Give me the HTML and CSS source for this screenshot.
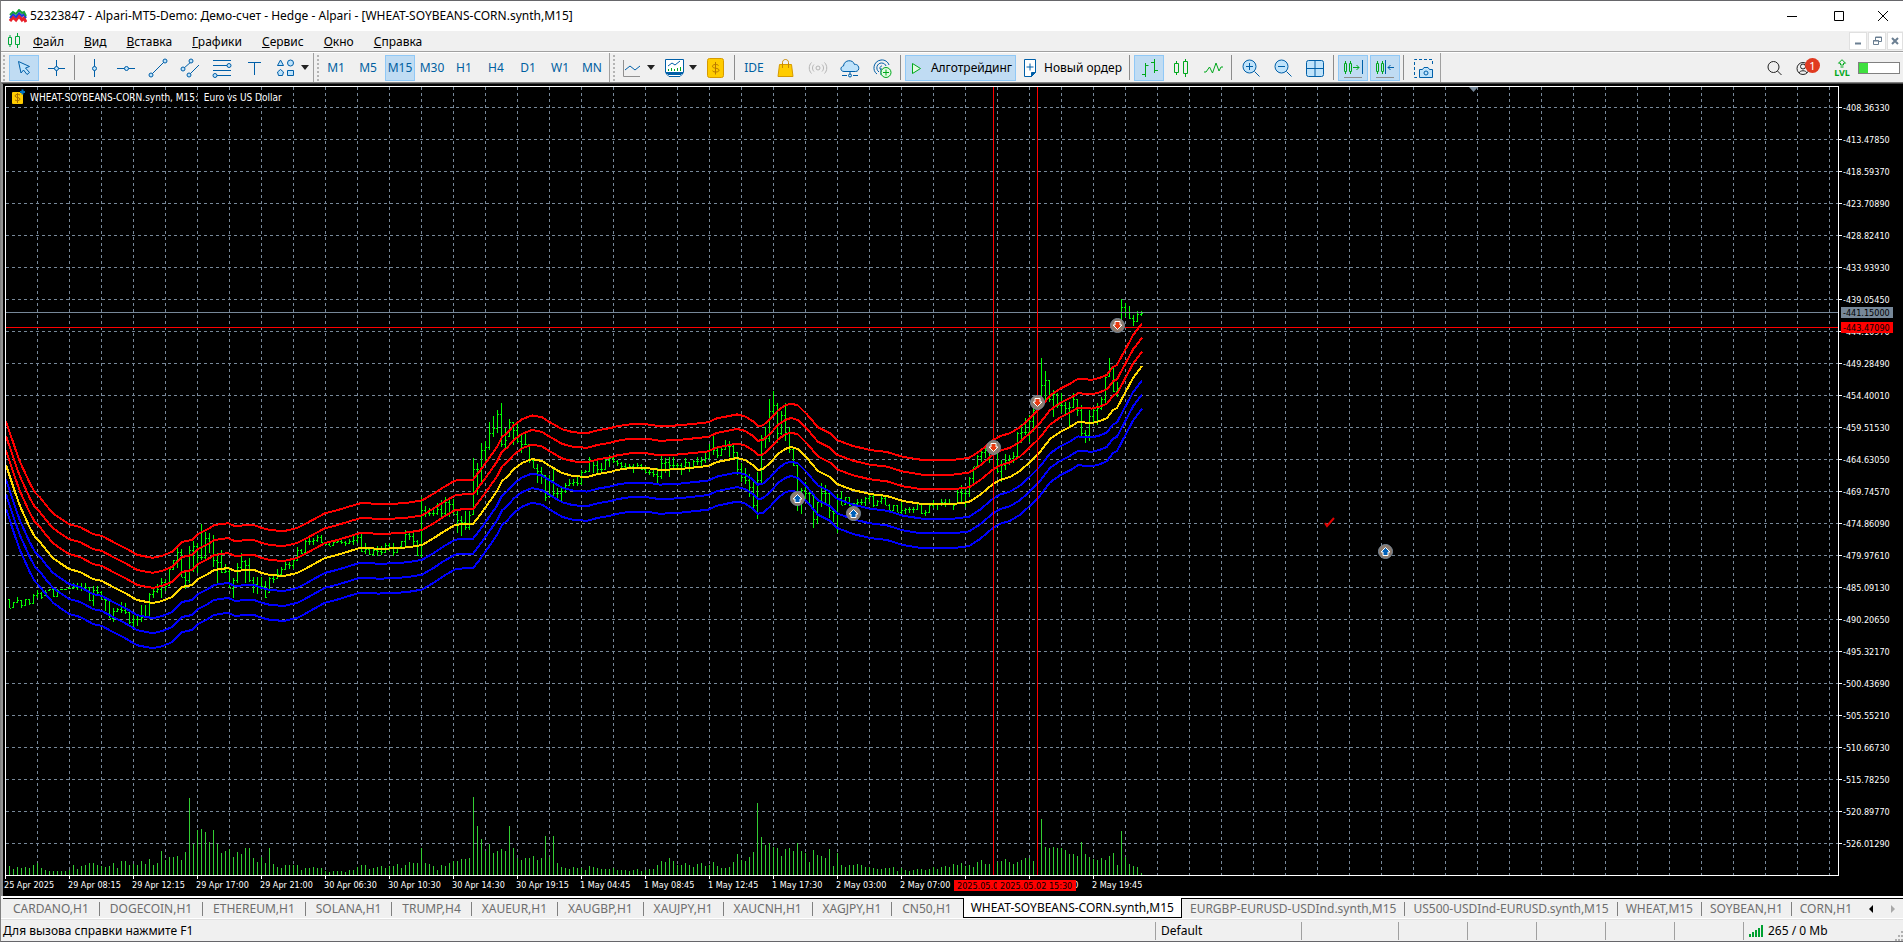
FILE: index.html
```
<!DOCTYPE html>
<html lang="ru">
<head>
    <meta charset="UTF-8">
    <meta name="viewport" content="width=device-width, initial-scale=1.0">
    <title>52323847 - Alpari-MT5-Demo</title>
    <link rel="stylesheet" href="styles.css">
</head>
<body>
    <header class="titlebar">
        <svg class="app-icon" width="18" height="14" viewBox="0 0 18 14" fill="none" stroke-width="2">
            <path d="M1 12l3-4 3 3 3-4 3 4 2-2 2 4" stroke="#e8202a" stroke-width="3"/>
            <path d="M1 9l3-4 3 3 3-4 3 3 2-2 2 4" stroke="#2038d8"/>
            <path d="M1 6l3-3 3 2 3-4 3 3 2-1 2 4" stroke="#18a038"/>
        </svg>
        <span class="title">52323847 - Alpari-MT5-Demo: Демо-счет - Hedge - Alpari - [WHEAT-SOYBEANS-CORN.synth,M15]</span>
        <div class="window-buttons">
            <button aria-label="Свернуть"><svg width="12" height="12" viewBox="0 0 12 12"><path d="M1 6.500h10" stroke="#000"/></svg></button>
            <button aria-label="Развернуть"><svg width="12" height="12" viewBox="0 0 12 12"><path d="M1.500 1.500h9v9h-9z" stroke="#000" fill="none"/></svg></button>
            <button aria-label="Закрыть"><svg width="12" height="12" viewBox="0 0 12 12"><path d="M1 1l10 10M11 1L1 11" stroke="#000"/></svg></button>
        </div>
    </header>

    <nav class="menubar">
        <svg class="menu-icon" width="14" height="16" viewBox="0 0 14 16" fill="none" stroke="#00a83a">
            <path d="M1.500 4.500h3v7h-3zM3 2v2.500M3 11.500V14M8.500 3.500h4v8h-4zM10.500 0v3.500M10.500 11.500V15"/>
        </svg>
        <a href="#"><u>Ф</u>айл</a>
        <a href="#"><u>В</u>ид</a>
        <a href="#"><u>В</u>ставка</a>
        <a href="#"><u>Г</u>рафики</a>
        <a href="#"><u>С</u>ервис</a>
        <a href="#"><u>О</u>кно</a>
        <a href="#"><u>С</u>правка</a>
        <div class="child-buttons">
            <button aria-label="Свернуть график"><svg width="10" height="10" viewBox="0 0 10 10"><path d="M2 7.500h6" stroke="#6b7f92" stroke-width="2"/></svg></button>
            <button aria-label="Восстановить график"><svg width="10" height="10" viewBox="0 0 10 10" fill="none" stroke="#6b7f92"><path d="M3.500 4V1h6v4.500H7M3 1.500h7M1.500 4.500h5v4h-5zM1 5h6"/></svg></button>
            <button aria-label="Закрыть график"><svg width="10" height="10" viewBox="0 0 10 10"><path d="M2 2l6 6M8 2L2 8" stroke="#6b7f92" stroke-width="2"/></svg></button>
        </div>
    </nav>

    <div class="toolbar">
        <span class="grip"></span>
        <button class="tool active" aria-label="Курсор"><svg width="24" height="24" viewBox="0 0 24 24" class="line"><path class="pale" d="M6.500 5.500l11 5-4 1.500 4 4.500-2.500 2-3.500-4.500-2.500 3z"/></svg></button>
        <button class="tool" aria-label="Перекрестие"><svg width="24" height="24" viewBox="0 0 24 24" class="line"><path d="M12.500 4v16M4 12.500h17"/><circle class="pale" cx="12.500" cy="12.500" r="2"/></svg></button>
        <span class="sep"></span>
        <button class="tool" aria-label="Вертикальная линия"><svg width="24" height="24" viewBox="0 0 24 24" class="line"><path d="M12.500 3v18"/><circle class="pale" cx="12.500" cy="12.500" r="2"/></svg></button>
        <button class="tool" aria-label="Горизонтальная линия"><svg width="24" height="24" viewBox="0 0 24 24" class="line"><path d="M3 12.500h18"/><circle class="pale" cx="12.500" cy="12.500" r="2"/></svg></button>
        <button class="tool" aria-label="Трендовая линия"><svg width="24" height="24" viewBox="0 0 24 24" class="line"><path d="M5 19L19 5"/><circle class="pale" cx="5" cy="19" r="2"/><circle class="pale" cx="19" cy="5" r="2"/></svg></button>
        <button class="tool" aria-label="Канал"><svg width="24" height="24" viewBox="0 0 24 24" class="line"><path d="M5 13l9-8M11 19L21 9"/><circle class="pale" cx="5" cy="13" r="2"/><circle class="pale" cx="13" cy="5" r="2"/><circle class="pale" cx="11" cy="19" r="2"/></svg></button>
        <button class="tool" aria-label="Уровни Фибоначчи"><svg width="24" height="24" viewBox="0 0 24 24" class="line"><path d="M3 4.500h18M3 9.500h18M3 14.500h18M3 19.500h18"/><circle class="pale" cx="19" cy="9.500" r="2"/><circle class="pale" cx="5" cy="19.500" r="2"/></svg></button>
        <button class="tool" aria-label="Текст"><svg width="24" height="24" viewBox="0 0 24 24" class="line"><path d="M6 6.500h13M12.500 6v13"/></svg></button>
        <button class="tool wide" aria-label="Фигуры"><svg width="24" height="24" viewBox="0 0 24 24" class="line"><path class="pale" d="M3.500 9.500l3-5.500 3 5.500zM6.500 13.500l3 2.500-1 3.500h-4l-1-3.500z"/><circle class="pale" cx="16.500" cy="7" r="3"/><path class="pale" d="M13.500 14.500h6v5h-6z"/></svg><i class="caret"></i></button>
        <span class="divider"></span>
        <span class="grip"></span>
        <button class="tool">M1</button>
        <button class="tool">M5</button>
        <button class="tool active">M15</button>
        <button class="tool">M30</button>
        <button class="tool">H1</button>
        <button class="tool">H4</button>
        <button class="tool">D1</button>
        <button class="tool">W1</button>
        <button class="tool">MN</button>
        <span class="divider"></span>
        <span class="grip"></span>
        <button class="tool wide" aria-label="Тип графика"><svg width="24" height="24" viewBox="0 0 24 24" class="line"><path stroke="#909090" d="M3.500 4v16.500H20"/><path d="M5 14l5-4 5 4 5-4"/></svg><i class="caret"></i></button>
        <button class="tool wide" aria-label="Индикаторы"><svg width="24" height="24" viewBox="0 0 24 24" class="line"><path d="M3.500 3.500h18v13h-18zM4 17.500l3 3h11l3-3z" fill="#fff"/><path d="M6 10l4-3 3 2 5-4"/><path stroke="#00a81c" d="M6.500 15v-2M9.500 15v-3M12.500 15v-2M15.500 15v-3M18.500 15v-4"/><path d="M6 18.500h13"/></svg><i class="caret"></i></button>
        <button class="tool" aria-label="Котировки"><svg width="24" height="24" viewBox="0 0 24 24"><rect x="3.500" y="2.500" width="16" height="19" rx="2" fill="#fc0" stroke="#d69a00"/><path d="M14.500 9.500c-1-1.500-6-1.500-6 .8 0 2.700 6.500 1.200 6.500 4 0 2.200-5.500 2.200-6.500.5M11.500 6v12.500" fill="none" stroke="#b87800"/></svg></button>
        <span class="sep"></span>
        <button class="tool">IDE</button>
        <button class="tool" aria-label="Маркет"><svg width="24" height="24" viewBox="0 0 24 24"><path d="M5.500 8.500h12l1.500 12H4z" fill="#fc0" stroke="#d69a00"/><path d="M8.500 12V6.500c0-4 6-4 6 0V12" fill="none" stroke="#c88a00"/></svg></button>
        <button class="tool" aria-label="Сигналы"><svg width="24" height="24" viewBox="0 0 24 24" fill="none" stroke="#b4b4b4"><circle cx="12" cy="12" r="2"/><path d="M8 8.500c-2 2-2 5 0 7M16 8.500c2 2 2 5 0 7M5.500 6.500c-3 3-3 8 0 11M18.500 6.500c3 3 3 8 0 11"/></svg></button>
        <button class="tool" aria-label="Облако"><svg width="24" height="24" viewBox="0 0 24 24" class="line"><path class="pale" d="M6 15.500c-4 0-4-5-.5-5.500C6 3.500 15 3 16.500 8.500c5-1 6 7 1 7z"/><path d="M12 15.500v4M4 19.500h5M15 19.500h5"/><circle class="pale" cx="12" cy="19.500" r="1.500"/></svg></button>
        <button class="tool" aria-label="VPS"><svg width="24" height="24" viewBox="0 0 24 24" class="line"><path d="M7 18c-5-3-4-13 4-14 4-.5 7 2 8 5M9 16c-4-3-2-9 2.500-9 2.500 0 4 1.500 4.500 3M11 14c-2-1.500-1-4 1-4M11 12v7"/><circle cx="16" cy="16.500" r="5" fill="#e2fbe2" stroke="#00a81c"/><path d="M16 13.500v6M13 16.500h6" stroke="#00a81c"/></svg></button>
        <span class="sep"></span>
        <button class="tool labelled algo active"><svg width="16" height="20" viewBox="0 0 16 20"><path d="M3.500 5.500l8 5-8 5z" fill="#e2fbe2" stroke="#00a81c"/></svg>Алготрейдинг</button>
        <button class="tool labelled order"><svg width="16" height="20" viewBox="0 0 16 20" class="line"><path fill="#fff" d="M2.500 1.500h11v13l-4 4h-7z"/><path d="M8 5.500v7M4.500 9h7"/><path fill="#005fa8" d="M13.500 14.500h-4v4z"/></svg>Новый ордер</button>
        <span class="sep"></span>
        <button class="tool active" aria-label="Бары"><svg width="24" height="24" viewBox="0 0 24 24" class="green"><path d="M8.500 7v14M5 18.500h3.500M8.500 9.500h3M17.500 3v14M14 6.500h3.500M17.500 14.500H21"/></svg></button>
        <button class="tool" aria-label="Свечи"><svg width="24" height="24" viewBox="0 0 24 24" class="green"><path d="M5.500 7.500h4v9h-4zM7.500 5v2.500M7.500 16.500V19M14.500 5.500h4v12h-4zM16.500 3v2.500M16.500 17.500V21"/></svg></button>
        <button class="tool" aria-label="Линия"><svg width="24" height="24" viewBox="0 0 24 24" class="green"><path d="M3 16h2l3.500-5 3 6 3.500-10 3 8 2-4h2"/></svg></button>
        <span class="sep"></span>
        <button class="tool" aria-label="Увеличить"><svg width="24" height="24" viewBox="0 0 24 24" class="line"><circle class="pale" cx="10.500" cy="10.500" r="6.500"/><path d="M15.500 15.500l5 5M7 10.500h7M10.500 7v7"/></svg></button>
        <button class="tool" aria-label="Уменьшить"><svg width="24" height="24" viewBox="0 0 24 24" class="line"><circle class="pale" cx="10.500" cy="10.500" r="6.500"/><path d="M15.500 15.500l5 5M7 10.500h7"/></svg></button>
        <button class="tool" aria-label="Окна мозаикой"><svg width="24" height="24" viewBox="0 0 24 24" class="line"><rect class="pale" x="3.500" y="4.500" width="17" height="16" rx="2"/><path d="M12 4.500v16M3.500 12.500h17"/></svg></button>
        <span class="sep"></span>
        <button class="tool active" aria-label="Автопрокрутка"><svg width="24" height="24" viewBox="0 0 24 24" class="green"><path d="M3.500 7.500h2v8h-2zM4.500 5v2.500M4.500 15.500V18M8.500 7.500h2v8h-2zM9.500 5v2.500M9.500 15.500V18M12 11.500h6M15.500 9l2.500 2.500-2.500 2.500"/><path stroke="#005fa8" d="M21.500 4v14"/><path stroke="#909090" d="M3 21.500h18"/></svg></button>
        <button class="tool active" aria-label="Сдвиг графика"><svg width="24" height="24" viewBox="0 0 24 24" class="green"><path d="M3.500 7.500h2v8h-2zM4.500 5v2.500M4.500 15.500V18M8.500 7.500h2v8h-2zM9.500 5v2.500M9.500 15.500V18"/><path stroke="#005fa8" d="M12.500 4v14M15 11.500h6M17.500 9L15 11.500l2.500 2.500"/><path stroke="#909090" d="M3 21.500h18"/></svg></button>
        <span class="sep"></span>
        <button class="tool" aria-label="Снимок"><svg width="24" height="24" viewBox="0 0 24 24" class="line"><path stroke-dasharray="3 2" d="M6 21.500H3.500v-18h18V10"/><path class="pale" d="M8.500 13.500h3l1.500-2h4l1.500 2h3v8h-13z"/><circle class="pale" cx="15" cy="17" r="2"/></svg></button>
        <span class="divider"></span>

        <div class="toolbar-right">
            <button class="tool" aria-label="Поиск"><svg width="24" height="24" viewBox="0 0 24 24" fill="none" stroke="#222"><circle cx="11.500" cy="11" r="5.500"/><path d="M15.500 15l4 4"/></svg></button>
            <button class="tool account" aria-label="Уведомления"><svg width="24" height="24" viewBox="0 0 24 24" fill="none" stroke="#222"><circle cx="11" cy="12.500" r="6"/><circle cx="11" cy="10.500" r="2.500"/><path d="M7 17c1-3 7-3 8 0"/></svg><span class="badge">1</span></button>
            <button class="tool level" aria-label="Уровень"><svg width="12" height="9" viewBox="0 0 12 9" class="green"><path d="M6 .7l3.500 3.500h-2V6h-3V4.200h-2zM4.500 8h3"/></svg><span>LVL</span></button>
            <div class="meter"><div class="meter-fill"></div></div>
        </div>
    </div>

    <main class="chart">
        <svg id="chart" role="img" aria-label="WHEAT-SOYBEANS-CORN.synth, M15"></svg>
    </main>

    <nav class="tabs">
        <a href="#">CARDANO,H1</a>
        <a href="#">DOGECOIN,H1</a>
        <a href="#">ETHEREUM,H1</a>
        <a href="#">SOLANA,H1</a>
        <a href="#">TRUMP,H4</a>
        <a href="#">XAUEUR,H1</a>
        <a href="#">XAUGBP,H1</a>
        <a href="#">XAUJPY,H1</a>
        <a href="#">XAUCNH,H1</a>
        <a href="#">XAGJPY,H1</a>
        <a href="#" class="before">CN50,H1</a>
        <a href="#" class="current">WHEAT-SOYBEANS-CORN.synth,M15</a>
        <a href="#">EURGBP-EURUSD-USDInd.synth,M15</a>
        <a href="#">US500-USDInd-EURUSD.synth,M15</a>
        <a href="#">WHEAT,M15</a>
        <a href="#">SOYBEAN,H1</a>
        <a href="#" class="before">CORN,H1</a>
        <button class="scroll" aria-label="Назад"><svg width="5" height="8" viewBox="0 0 5 8"><path d="M4 0v8L0 4z" fill="#000"/></svg></button>
        <button class="scroll" aria-label="Вперёд"><svg width="5" height="8" viewBox="0 0 5 8"><path d="M1 0v8l4-4z" fill="#a8a8a8"/></svg></button>
    </nav>

    <footer class="statusbar">
        <span class="help">Для вызова справки нажмите F1</span>
        <span class="cell profile">Default</span>
        <span class="cell date"></span>
        <span class="cell"></span>
        <span class="cell"></span>
        <span class="cell"></span>
        <span class="cell"></span>
        <span class="cell"></span>
        <span class="cell traffic">
            <svg width="14" height="12" viewBox="0 0 14 12" stroke="#00a030" stroke-width="2"><path d="M1 12V9M4 12V7M7 12V5M10 12V3M13 12V0"/></svg>
            265 / 0 Mb
        </span>
        <svg class="sizer" width="8" height="10" viewBox="0 0 8 10" fill="#b0b0b0"><path d="M6 0h2v2H6zM6 4h2v2H6zM3 4h2v2H3zM6 8h2v2H6zM3 8h2v2H3zM0 8h2v2H0z"/></svg>
    </footer>

    <script src="chart.js"></script>
</body>
</html>
```
FILE: styles.css
```
* {
    box-sizing: border-box;
}
body {
    margin: 0;
    height: 100vh;
    display: flex;
    flex-direction: column;
    font-family: "Noto Sans", "Open Sans", sans-serif;
    font-size: 12px;
    color: #000;
    background-color: #f0f0f0;
    border-top: 1px solid #66666a;
    border-bottom: 1px solid #66666a;
    border-left: 1px solid #808080;
    overflow: hidden;
}
a {
    color: inherit;
    text-decoration: none;
}
button {
    font: inherit;
    padding: 0;
    border: none;
    background: none;
    display: flex;
    align-items: center;
    justify-content: center;
}
.titlebar {
    height: 30px;
    flex: none;
    display: flex;
    align-items: center;
    padding-left: 8px;
    background-color: #fff;
}
.title {
    margin-left: 3px;
    padding-bottom: 1px;
}
.window-buttons {
    margin-left: auto;
    display: flex;
    gap: 2px;
}
.window-buttons button {
    width: 45px;
    height: 29px;
}
.window-buttons button:last-child {
    width: 40px;
}
.menubar {
    height: 21px;
    flex: none;
    display: flex;
    align-items: center;
    padding-left: 6px;
    border-bottom: 1px solid #a0a0a0;
}
.menu-icon {
    margin-right: 2px;
}
.menubar a {
    padding: 0 10px;
}
.child-buttons {
    margin-left: auto;
    display: flex;
    gap: 1px;
}
.child-buttons button {
    width: 18px;
    height: 18px;
    background-color: #fff;
    border: 1px solid #e0e0e0;
}
.child-buttons button:last-child {
    width: 16px;
}

/* Toolbar */
.toolbar {
    height: 31px;
    flex: none;
    display: flex;
    align-items: center;
    gap: 2px;
    padding-left: 1px;
    border-top: 1px solid #fff;
    border-bottom: 1px solid #808080;
}
.grip {
    width: 2px;
    height: 26px;
    margin: 0 0 0 1px;
    background: repeating-linear-gradient(#b4b4b4 0 2px, transparent 2px 4px);
}
.toolbar > .grip:first-child {
    margin-right: 2px;
}
.sep {
    width: 1px;
    height: 25px;
    margin: 0 2px 0 1px;
    background-color: #8c8c8c;
}
.divider {
    width: 1px;
    height: 29px;
    background-color: #a0a0a0;
}
.tool {
    width: 30px;
    height: 26px;
    flex: none;
    color: #005fa0;
    border: 1px solid transparent;
}
.tool.active {
    background-color: #c0dcf3;
    border-color: #90c8f6;
}
.tool.wide {
    width: 40px;
    justify-content: flex-start;
    padding-left: 2px;
}
.caret {
    margin-left: 3px;
    border: 4px solid transparent;
    border-top: 5px solid #222;
    border-bottom: 0;
}
.tool.labelled {
    color: #000;
    gap: 6px;
}
.algo {
    width: 111px;
}
.order {
    width: 108px;
}
.line {
    fill: none;
    stroke: #005fa8;
}
.green {
    fill: none;
    stroke: #00a81c;
}
.pale {
    fill: #bfe3fb;
}
.toolbar-right {
    margin-left: auto;
    display: flex;
    align-items: center;
    padding-right: 3px;
}
.account {
    position: relative;
}
.badge {
    position: absolute;
    left: 15px;
    top: 2px;
    width: 15px;
    height: 15px;
    line-height: 15px;
    border-radius: 50%;
    background-color: #e03a20;
    color: #fff;
    font-size: 11px;
}
.level {
    flex-direction: column;
    margin: 0 1px 0 8px;
    color: #00a81c;
    font-size: 9px;
    font-weight: bold;
    line-height: 9px;
}
.meter {
    width: 42px;
    height: 12px;
    border: 1px solid #808080;
    background-color: #fff;
}
.meter-fill {
    width: 22%;
    height: 100%;
    background-color: #3ee03e;
}

/* Chart */
.chart {
    flex: 1;
    min-height: 0;
    border-top: 1px solid #404040;
    border-left: 2px solid #909090;
    background-color: #000;
}
.chart svg {
    display: block;
    width: 100%;
    height: 100%;
    font-family: "DejaVu Sans Condensed", "DejaVu Sans", sans-serif;
    font-size: 9px;
    fill: #fff;
}
.chart .header {
    font-size: 10px;
}
.chart .frame {
    fill: none;
    stroke: #fff;
}
.chart .grid {
    fill: none;
    stroke: #778899;
    stroke-dasharray: 3 3;
}
.chart .bars {
    fill: none;
    stroke: #00ff00;
}
.chart .volumes {
    fill: none;
    stroke: #32cd32;
}
.chart .band {
    fill: none;
    stroke-width: 2;
}
.chart .upper {
    stroke: #ff0000;
}
.chart .middle {
    stroke: #ffd700;
}
.chart .lower {
    stroke: #0000ff;
}
.chart .bid {
    stroke: #778899;
}
.chart .level-line {
    stroke: #ff0000;
}
.chart .on-box {
    fill: #000;
}

/* Chart tabs */
.tabs {
    height: 23px;
    flex: none;
    display: flex;
    align-items: stretch;
    padding-left: 2px;
    border-top: 2px solid #fff;
    border-bottom: 1px solid #fff;
    color: #6e6e6e;
}
.tabs a {
    flex: 5 1 auto;
    display: flex;
    align-items: center;
    justify-content: center;
    white-space: nowrap;
    border-top: 1px solid #000;
}
.tabs a::after {
    content: "";
    align-self: center;
    width: 1px;
    height: 14px;
    margin-left: auto;
    background-color: #808080;
}
.tabs a::before {
    content: "";
    margin-right: auto;
}
.tabs a.before::after {
    background: none;
}
.tabs a.current {
    flex: none;
    padding: 0 7px;
    color: #000;
    background-color: #fff;
    border: 1px solid #000;
    border-top: none;
}
.tabs a.current::after {
    content: none;
}
.tabs a.current ~ a {
    flex-grow: 4;
}
.scroll {
    width: 21px;
    border-top: 1px solid #000;
}

/* Status bar */
.statusbar {
    height: 22px;
    flex: none;
    display: flex;
    align-items: center;
    border-top: 1px solid #e0e0e0;
}
.help {
    flex: 1;
    padding-left: 2px;
}
.cell {
    width: 69px;
    height: 18px;
    line-height: 18px;
    padding-left: 5px;
    border-left: 1px solid #a0a0a0;
}
.profile {
    width: 146px;
}
.date {
    width: 97px;
}
.traffic {
    width: 152px;
    display: flex;
    align-items: center;
    gap: 5px;
}
.sizer {
    align-self: flex-end;
}
```
FILE: chart.js
```
// the drawing is in window pixels, the svg itself starts at (3, 84)
const ORIGIN_X = 3, ORIGIN_Y = 84;
const LEFT = 5, TOP = 86, STEP = 32, BAR = 4, FIRST = 9;

const svg = document.getElementById('chart');
const width = svg.clientWidth + ORIGIN_X;
const height = svg.clientHeight + ORIGIN_Y;
const right = width - 65;
const bottom = height - 21;

// high, low, close
const bars = [
    599,608,608, 602,608,602, 597,603,600, 600,608,605, 599,606,599, 599,605,603, 594,604,595, 590,598,593,
    592,599,597, 590,596,592, 589,591,589, 589,597,596, 589,597,590, 589,590,589, 589,590,589, 587,589,588,
    583,589,587, 583,590,586, 583,591,588, 583,590,587, 587,601,600, 586,606,590, 586,595,592, 591,599,599,
    599,611,600, 600,618,618, 608,622,611, 608,612,609, 602,613,610, 603,614,612, 610,624,622, 615,627,619,
    615,626,619, 605,622,617, 605,617,616, 593,617,594, 588,598,591, 584,593,589, 578,598,582, 579,591,586,
    569,586,569, 560,570,560, 547,568,552, 549,577,577, 571,589,580, 546,583,550, 541,572,546, 543,573,557,
    524,560,557, 532,560,538, 533,553,541, 535,567,560, 553,583,562, 550,573,572, 564,573,571, 567,588,588,
    578,598,580, 563,583,567, 553,569,561, 560,583,565, 558,582,580, 577,593,584, 577,594,586, 577,590,586,
    581,598,597, 577,593,578, 576,583,579, 569,579,574, 567,575,569, 562,570,564, 562,569,565, 560,569,560,
    547,561,550, 549,554,553, 540,553,541, 538,545,541, 538,545,540, 535,542,537, 535,543,542, 542,545,544,
    543,546,546, 541,546,542, 539,543,541, 540,544,542, 541,546,543, 539,544,541, 536,545,540, 534,543,537,
    534,552,551, 543,554,549, 548,555,554, 548,556,550, 546,556,551, 546,555,552, 543,553,545, 543,551,548,
    543,556,552, 547,553,547, 541,547,541, 530,547,534, 531,540,536, 531,545,541, 540,556,555, 497,557,510,
    506,517,513, 508,516,513, 508,516,513, 503,515,509, 500,517,513, 497,515,502, 498,517,504, 499,514,514,
    511,533,520, 516,536,522, 511,530,527, 511,530,515, 458,515,469, 463,495,469, 443,483,450, 441,465,447,
    422,450,433, 416,437,428, 410,433,414, 403,447,444, 428,448,440, 419,437,422, 422,445,430, 422,443,441,
    435,453,444, 432,445,444, 444,463,460, 458,468,468, 464,483,471, 467,484,474, 475,501,497, 475,497,480,
    468,497,493, 488,498,493, 487,501,491, 483,493,485, 479,486,483, 479,486,482, 477,486,483, 470,485,472,
    470,473,471, 457,472,459, 461,473,465, 460,475,469, 463,472,469, 458,470,460, 455,467,458, 457,463,461,
    460,466,463, 462,468,466, 463,469,467, 464,469,466, 464,473,467, 463,469,465, 464,470,469, 466,473,472,
    470,475,472, 470,477,474, 468,483,476, 456,479,463, 458,473,462, 457,477,465, 457,468,465, 463,469,465,
    463,475,468, 458,467,462, 462,472,467, 460,468,461, 457,465,461, 457,467,460, 453,463,458, 444,459,449,
    436,455,450, 448,458,455, 448,456,449, 440,450,446, 441,457,446, 444,458,452, 452,475,469, 463,482,477,
    468,484,480, 474,497,487, 482,510,505, 472,519,480, 435,483,438, 427,448,438, 399,442,411, 391,415,405,
    403,443,433, 411,435,415, 403,441,432, 427,453,449, 448,466,465, 465,511,494, 488,514,490, 482,500,493,
    492,504,493, 495,528,519, 502,524,502, 483,507,493, 485,503,493, 493,518,510, 511,522,513, 494,533,498,
    491,505,505, 497,505,497, 497,506,505, 503,510,503, 499,505,502, 499,505,502, 497,506,498, 495,502,496,
    495,507,505, 500,506,501, 495,504,498, 497,505,505, 504,512,510, 505,511,505, 505,512,512, 502,514,510,
    508,514,509, 507,513,509, 507,513,509, 502,510,502, 503,514,513, 510,516,512, 505,513,505, 500,508,503,
    503,510,504, 499,506,502, 499,507,503, 499,505,503, 503,510,505, 490,504,492, 485,502,493, 488,507,493,
    477,497,478, 467,483,466, 455,468,456, 450,462,452, 447,458,450, 443,463,455, 440,453,448, 453,473,471,
    460,482,465, 454,470,460, 455,465,458, 452,463,456, 432,458,433, 424,443,432, 418,435,432, 415,442,421,
    408,432,410, 398,413,402, 358,403,385, 371,400,380, 380,402,399, 390,417,394, 393,408,405, 393,413,405,
    402,415,408, 402,426,407, 393,408,399, 399,416,410, 405,438,433, 430,443,435, 410,441,416, 408,424,410,
    403,425,408, 397,410,399, 375,403,377, 358,377,368, 367,392,391, 382,397,388, 299,327,307, 303,317,312,
    306,319,318, 315,326,321, 311,322,314, 311,316,313
];

const volumes = [
    9,6,8,7,8,7,10,12,7,5,4,4,4,4,4,5,10,6,9,10,12,12,10,9,8,9,12,7,14,14,10,11,10,14,11,16,10,12,24,15,
    18,18,19,15,23,77,31,45,46,43,33,45,31,22,24,26,18,23,21,27,27,17,13,18,12,27,11,8,7,10,10,10,10,5,7,7,8,7,7,
    4,3,4,4,4,3,5,5,8,10,10,6,7,8,9,7,9,9,11,7,10,13,12,12,27,12,11,9,5,10,9,12,14,14,16,16,17,78,49,36,24,31,
    22,24,26,24,49,27,17,15,17,17,19,15,17,39,18,39,12,8,7,6,8,7,7,5,9,8,7,6,6,6,7,5,5,5,4,5,6,4,5,6,6,10,14,13,
    17,14,10,10,12,10,8,11,12,9,10,13,9,7,7,8,13,21,15,14,18,23,72,38,30,32,28,27,19,26,27,24,32,24,22,13,25,20,
    19,17,26,9,22,10,8,10,10,11,10,8,8,7,6,6,7,7,8,4,7,5,4,5,6,6,5,6,8,6,8,9,8,11,10,12,9,10,8,13,15,11,11,11,
    13,14,16,13,11,13,15,17,17,14,9,56,28,27,28,27,27,25,21,21,19,33,21,18,16,15,17,15,19,22,10,44,18,11,9,8,2
];

// middle line of the channel
const middle = [
    [6,465],[10,477],[15,492],[20,506],[25,517],[30,528],[35,537],[40,542],[47,551],[53,558],[60,563],[69,569],
    [80,572],[93,579],[102,581],[113,587],[125,593],[137,600],[147,602],[153,603],[162,601],[172,597],[182,587],
    [192,585],[198,579],[208,574],[214,570],[228,568],[235,571],[247,570],[254,570],[262,573],[270,575],[284,576],
    [297,573],[305,569],[314,564],[325,558],[337,555],[350,551],[360,548],[370,548],[378,549],[400,548],[410,547],
    [422,545],[434,538],[443,532],[455,525],[463,524],[473,524],[480,515],[490,501],[497,491],[502,481],[507,477],
    [514,469],[522,463],[532,459],[542,461],[550,466],[562,473],[573,476],[587,477],[598,474],[610,472],[617,470],
    [630,468],[647,468],[660,470],[680,469],[708,466],[717,462],[727,460],[737,458],[745,460],[753,465],[758,470],
    [763,469],[770,463],[778,454],[785,449],[791,447],[798,449],[807,458],[818,471],[830,477],[837,484],[853,490],
    [870,494],[887,496],[903,501],[922,504],[953,504],[969,502],[980,495],[993,484],[1000,480],[1010,477],
    [1020,471],[1030,462],[1040,452],[1050,439],[1060,432],[1070,427],[1078,422],[1092,423],[1100,421],[1107,418],
    [1113,410],[1117,408],[1125,393],[1133,378],[1142,366]
];

const timeLabels = [
    '25 Apr 2025', '29 Apr 08:15', '29 Apr 12:15', '29 Apr 17:00', '29 Apr 21:00', '30 Apr 06:30',
    '30 Apr 10:30', '30 Apr 14:30', '30 Apr 19:15', '1 May 04:45', '1 May 08:45', '1 May 12:45',
    '1 May 17:30', '2 May 03:00', '2 May 07:00', '2 May 11:00', '2 May 15:30', '2 May 19:45'
];

function path(d, cls) {
    return `<path class="${cls}" d="${d}" shape-rendering="crispEdges"/>`;
}

function text(x, y, value, cls = '') {
    return `<text x="${x}" y="${y}" class="${cls}">${value}</text>`;
}

function drawGrid() {
    let d = '';
    for (let x = LEFT + STEP; x < right; x += STEP) {
        d += `M${x + 0.5} ${TOP + 1}V${bottom}`;
    }
    for (let y = TOP + 21; y < bottom; y += STEP) {
        d += `M${LEFT + 1} ${y + 0.5}H${right}`;
    }
    return path(d, 'grid');
}

function drawVolumes() {
    return path(volumes.map((v, i) => `M${FIRST + i * BAR + 0.5} ${bottom}v${-v}`).join(''), 'volumes');
}

function drawBars() {
    let d = '';
    let open = bars[0];
    for (let i = 0; i < bars.length; i += 3) {
        const [high, low, close] = bars.slice(i, i + 3);
        const x = FIRST + (i / 3) * BAR;
        open = Math.min(Math.max(open, high), low - 1);
        d += `M${x + 0.5} ${high}V${low}M${x - 1} ${open + 0.5}h1M${x + 1} ${close + 0.5}h1`;
        open = close;
    }
    return path(d, 'bars');
}

function drawBands() {
    let out = '';
    for (let n = -3; n <= 3; n++) {
        const cls = n < 0 ? 'upper' : n > 0 ? 'lower' : 'middle';
        const points = middle.map(([x, y]) => [x, y + n * (14.2 + (y - 366) / 270)]);
        out += path('M' + points.map(p => p[0] + ' ' + p[1].toFixed(1)).join('L'), 'band ' + cls);
    }
    return out;
}

function drawMarker(x, y, up) {
    const turn = up ? '' : ' rotate(180)';
    return `<g transform="translate(${x + 0.5} ${y + 0.5})${turn}">
        <circle r="7" fill="#8c7b6e" stroke="#778899"/>
        <path d="M0-4L4.500 0.500H2.500V4H-2.500V0.500H-4.500z" fill="${up ? '#0060b8' : '#e83a10'}" stroke="#fff"/>
    </g>`;
}

function drawPriceAxis() {
    let out = '', d = '';
    let price = -408.3633;
    for (let y = TOP + 21; y < bottom; y += STEP) {
        d += `M${right} ${y + 0.5}h4`;
        out += text(right + 5, y + 4, price.toFixed(5));
        price -= 5.1152;
    }
    out += `<rect x="${right + 3}" y="307" width="52" height="11" fill="#778899"/>` + text(right + 5, 316, '-441.15000', 'on-box');
    out += `<rect x="${right + 3}" y="322" width="52" height="11" fill="#f00"/>` + text(right + 5, 331, '-443.47090', 'on-box');
    return path(d, 'frame') + out;
}

function drawTimeAxis() {
    let out = '', d = '';
    timeLabels.forEach((label, i) => {
        const x = LEFT + i * STEP * 2;
        d += `M${x + 0.5} ${bottom}v4`;
        out += text(x - 1, bottom + 13, label);
    });
    [[954, '2025.05.02 11:30'], [997, '2025.05.02 15:30']].forEach(([x, label]) => {
        out += `<rect x="${x}" y="${bottom + 5}" width="79" height="11" fill="#f00"/>` + text(x + 3, bottom + 14, label, 'on-box');
    });
    return path(d, 'frame') + out;
}

svg.innerHTML = `<g transform="translate(${-ORIGIN_X} ${-ORIGIN_Y})">`
    + drawGrid()
    + drawVolumes()
    + drawBars()
    + drawBands()
    + path(`M${LEFT} 312.5H${right}`, 'bid')
    + path(`M${LEFT} 327.5H${right}M993.5 ${TOP}V${bottom}M1037.5 ${TOP}V${bottom}`, 'level-line')
    + drawMarker(797, 498, true)
    + drawMarker(853, 513, true)
    + drawMarker(1385, 551, true)
    + drawMarker(993, 447, false)
    + drawMarker(1037, 402, false)
    + drawMarker(1117, 325, false)
    + '<path d="M1325 523l2 3 7-8" fill="none" stroke="#e00000" stroke-width="2"/>'
    + '<path d="M1469 87h9l-4.500 5z" fill="#778899"/>'
    + path(`M${LEFT + 0.5} ${bottom + 0.5}V${TOP + 0.5}H${right + 0.5}V${bottom + 0.5}z`, 'frame')
    + '<rect x="12" y="92" width="11" height="12" rx="1" fill="#fc0"/>'
    + '<path d="M20 95c-1-1-5-1-5 1s5 1 5 3-4 2-5 1M17.500 93v10" fill="none" stroke="#a87000"/>'
    + '<path d="M22.500 89.500v5M20 92h5" stroke="#0070c0" stroke-width="2"/>'
    + text(30, 101, 'WHEAT-SOYBEANS-CORN.synth, M15:&#160; Euro vs US Dollar', 'header')
    + drawPriceAxis()
    + drawTimeAxis()
    + '</g>';
```
